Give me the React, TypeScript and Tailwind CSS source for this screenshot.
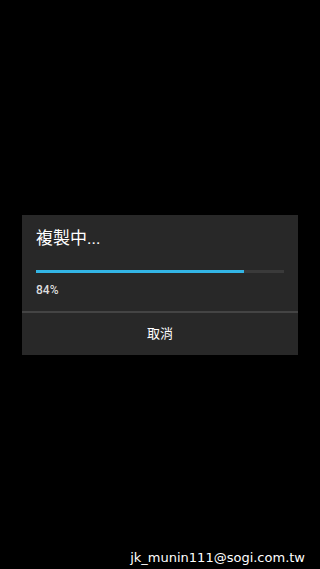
import React from "react";

export default function App() {
  const font = { fontFamily: '"Roboto", "Noto Sans CJK TC", sans-serif' };
  return (
    <div className="relative w-[320px] h-[569px] bg-black overflow-hidden" style={font}>
      <div className="flex h-full items-center justify-center">
        <div className="w-[276px] h-[140px] bg-[#282828] flex flex-col">
          <div className="px-[14px] pt-[12px]">
            <div className="h-[22px] text-[17px] leading-[22px] text-white">複製中...</div>
            <div className="mt-[21px] h-[3px] w-[248px] bg-[#3a3a3a] flex">
              <div className="h-full bg-[#33b5e5]" style={{ width: "84%" }} />
            </div>
            <div className="mt-[9px] h-[16px] text-[12px] leading-[16px] font-medium text-[#dcdcdc]">84%</div>
          </div>
          <div className="mt-[13px] h-[2px] bg-[#444444]" />
          <div className="flex-1 flex items-center justify-center text-[13px] text-white">取消</div>
        </div>
      </div>
      <div className="absolute right-[15px] bottom-[3px] text-[13px] leading-[16px] text-white" style={{ fontFamily: '"DejaVu Sans", sans-serif' }}>
        jk_munin111@sogi.com.tw
      </div>
    </div>
  );
}
